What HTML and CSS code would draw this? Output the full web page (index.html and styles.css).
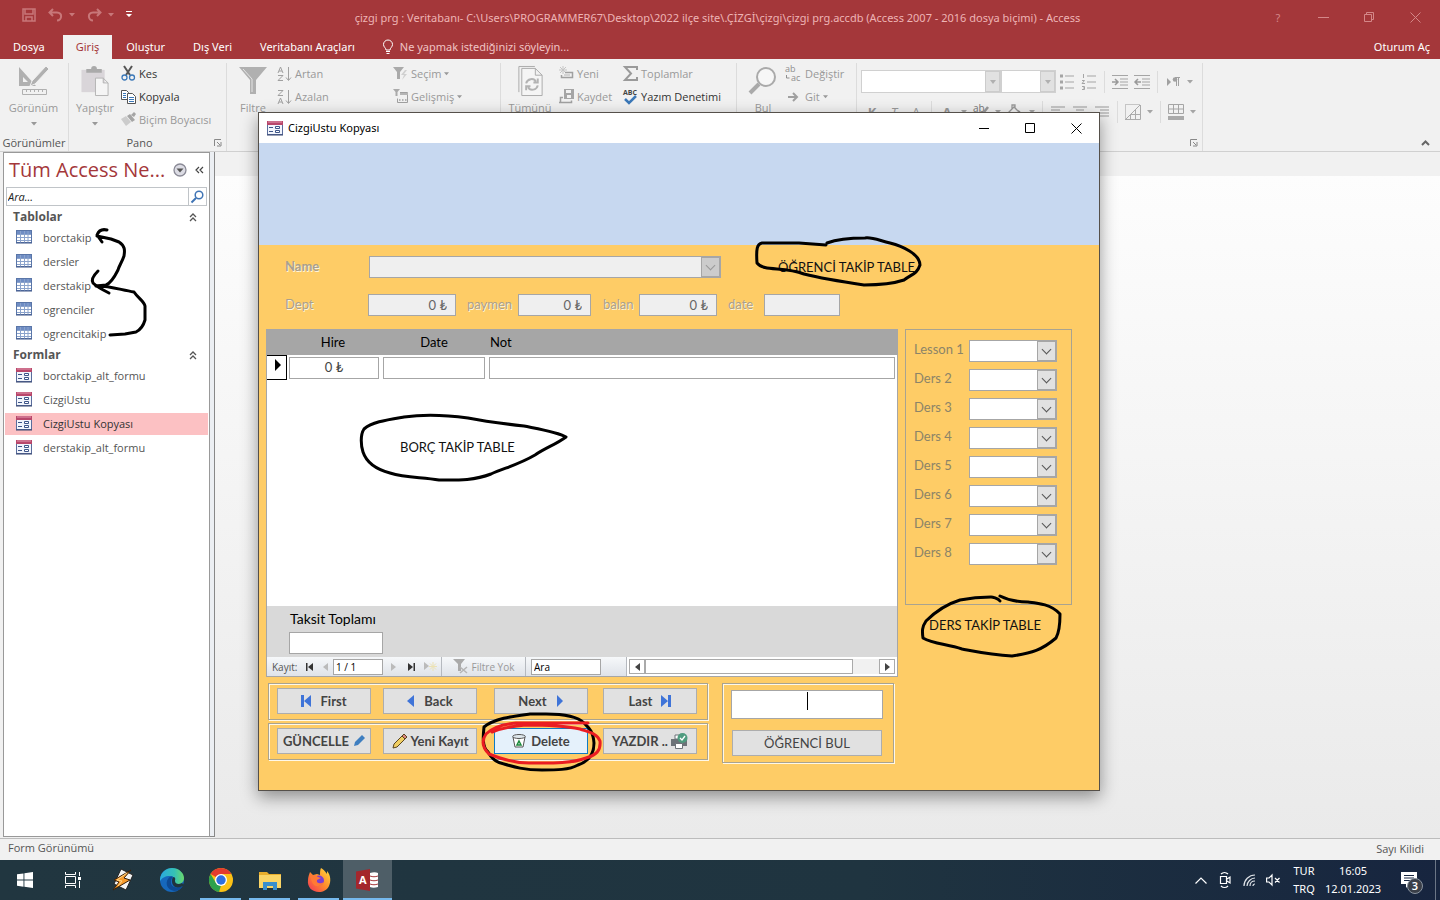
FILE: index.html
```html
<!DOCTYPE html>
<html lang="tr">
<head>
    <meta charset="UTF-8">
    <meta name="viewport" content="width=device-width, initial-scale=1.0">
    <title>çizgi prg - Access</title>
    <link rel="stylesheet" href="styles.css">
</head>
<body>
    <!-- Shared icons -->
    <svg class="symbols" aria-hidden="true">
        <symbol id="i-table" viewBox="0 0 16 14">
            <rect x=".5" y=".5" width="15" height="12" fill="#fff" stroke="#5a76a8"/>
            <path d="M1 1h14v3H1z" fill="#6f8dc4"/>
            <path d="M1 4.500h14M1 7.500h14M1 10.500h14M4.500 1v12M8.500 1v12M12 1v12" stroke="#8ba3cc" fill="none"/>
            <path d="M0 13h16" stroke="#3d5588"/>
        </symbol>
        <symbol id="i-form" viewBox="0 0 16 15">
            <rect x=".5" y=".5" width="15" height="13" fill="#f2f5fc" stroke="#5a6d9c"/>
            <path d="M0 0h16v4H0z" fill="#b8476b"/>
            <path d="M1 1h14" stroke="#e49ab0"/>
            <path d="M2 6.500h4M2 10.500h4" stroke="#3d5588"/>
            <path d="M8.500 5.500h4v2h-4zM8.500 9.500h4v2h-4z" fill="#fff" stroke="#3d5588"/>
            <path d="M0 14h16" stroke="#35456f"/>
        </symbol>
        <symbol id="i-down" viewBox="0 0 6 4"><path d="M0 0h6L3 3.500z" fill="currentColor"/></symbol>
        <symbol id="i-dblup" viewBox="0 0 8 9"><path d="M1 4l3-3 3 3M1 8l3-3 3 3" fill="none" stroke="#555" stroke-width="1.300"/></symbol>
        <symbol id="i-launch" viewBox="0 0 8 8"><path d="M.5 7V.5H7M3 3l3 3M7 3v4H3" fill="none" stroke="currentColor"/></symbol>
        <symbol id="i-align" viewBox="0 0 14 12"><path d="M0 1h14M0 4h9M0 7h14M0 10h9" stroke="currentColor"/></symbol>
    </svg>

    <!-- Title bar -->
    <header class="titlebar">
        <div class="quick">
            <button aria-label="Kaydet"><svg width="14" height="14" viewBox="0 0 14 14"><path d="M1 1h12v12H1zM3 1v5h8V1M4 13V9h6v4" fill="none" stroke="currentColor" stroke-width="1.500"/></svg></button>
            <button aria-label="Geri al" class="wide"><svg width="15" height="14" viewBox="0 0 15 14"><path d="M5 1L1.500 4.500 5 8M2 4.500h7c6 0 5 8 0 8" fill="none" stroke="currentColor" stroke-width="2"/></svg><svg width="6" height="4"><use href="#i-down"/></svg></button>
            <button aria-label="Yinele" class="wide"><svg width="15" height="14" viewBox="0 0 15 14"><path d="M10 1l3.500 3.500L10 8M13 4.500H6c-6 0-5 8 0 8" fill="none" stroke="currentColor" stroke-width="2"/></svg><svg width="6" height="4"><use href="#i-down"/></svg></button>
            <button aria-label="Özelleştir" class="bright"><svg width="6" height="7" viewBox="0 0 6 7"><path d="M0 0h6v1H0zM0 3h6L3 6z" fill="currentColor"/></svg></button>
        </div>
        <h1>çizgi prg : Veritabanı- C:\Users\PROGRAMMER67\Desktop\2022 ilçe site\.ÇİZGİ\çizgi\çizgi prg.accdb (Access 2007 - 2016 dosya biçimi) - Access</h1>
        <div class="win-controls">
            <button>?</button>
            <button aria-label="Simge durumu"><svg width="11" height="11"><path d="M0 5.500h11" stroke="currentColor"/></svg></button>
            <button aria-label="Geri yükle"><svg width="11" height="11"><path d="M.5 2.500h7v7h-7zM2.500 2.500v-2h7v7h-2" fill="none" stroke="currentColor"/></svg></button>
            <button aria-label="Kapat"><svg width="11" height="11"><path d="M.5.5l10 10M10.500.5l-10 10" stroke="currentColor"/></svg></button>
        </div>
    </header>

    <nav class="tabs">
        <a href="#" class="file">Dosya</a>
        <a href="#" class="active">Giriş</a>
        <a href="#">Oluştur</a>
        <a href="#">Dış Veri</a>
        <a href="#">Veritabanı Araçları</a>
        <a href="#" class="tell"><svg width="10" height="14" viewBox="0 0 10 14"><path d="M3 10c0-2-2.500-3-2.500-5.500a4.500 4.500 0 019 0C9.500 7 7 8 7 10zM3 11.500h4M3.500 13.500h3" fill="none" stroke="#fff"/></svg>Ne yapmak istediğinizi söyleyin...</a>
        <a href="#" class="signin">Oturum Aç</a>
    </nav>

    <!-- Ribbon -->
    <div class="ribbon">
        <section class="group views">
            <div class="tools">
                <button class="big" disabled>
                    <svg width="32" height="30" viewBox="0 0 32 30"><path d="M1 1l17 19H1zM5 11v5h5z" fill="#b0b0b0" fill-rule="evenodd"/><path d="M28 0l3 3-14 15-5 2 2-5z" fill="#b0b0b0" stroke="#f1f1f1"/><path d="M4.500 23.500h24v5h-24zM8.500 24v2M12.500 24v2M16.500 24v2M20.500 24v2M24.500 24v2" fill="none" stroke="#b0b0b0"/></svg>
                    <span>Görünüm</span>
                    <svg width="6" height="4"><use href="#i-down"/></svg>
                </button>
            </div>
            <h2>Görünümler</h2>
        </section>
        <section class="group clipboard">
            <div class="tools">
                <button class="big" disabled>
                    <svg width="28" height="31" viewBox="0 0 28 31"><path d="M0 4h24v23H0z" fill="#d9d5d9"/><path d="M5 3h5a3 3 0 016 0h5v4H5z" fill="#aaa"/><path d="M14.500 12.500h8l5 5v13h-13zM22.500 12.500v5h5" fill="#f5f5f5" stroke="#b3b3b3"/></svg>
                    <span>Yapıştır</span>
                    <svg width="6" height="4"><use href="#i-down"/></svg>
                </button>
                <div class="stack">
                    <button><svg width="15" height="15" viewBox="0 0 15 15"><path d="M3 0l6 9M11 0L5 9" stroke="#555" stroke-width="2"/><circle cx="3.500" cy="11.500" r="2.500" fill="none" stroke="#3b78b8" stroke-width="1.300"/><circle cx="11" cy="11.500" r="2.500" fill="none" stroke="#3b78b8" stroke-width="1.300"/></svg>Kes</button>
                    <button><svg width="15" height="15" viewBox="0 0 15 15"><path d="M.5 1.500h5l2 2v7h-7z" fill="#fff" stroke="#555"/><path d="M6.500 4.500h5l3 3v7h-8z" fill="#fff" stroke="#555"/><path d="M2 4.500h3M2 6.500h3M2 8.500h3M8 8.500h5M8 10.500h5M8 12.500h5" stroke="#3b78b8"/></svg>Kopyala</button>
                    <button disabled><svg width="15" height="15" viewBox="0 0 15 15"><path d="M0 7l5-3 5 6-5 4z" fill="#ccc"/><path d="M6 4l3-2 5 6-3 2zM10 3l3-3 2 2-2 3z" fill="#a5a5a5"/></svg>Biçim Boyacısı</button>
                </div>
            </div>
            <h2>Pano</h2>
            <svg class="launch" width="8" height="8"><use href="#i-launch"/></svg>
        </section>
        <section class="group filter">
            <div class="tools">
                <button class="big" disabled>
                    <svg width="28" height="30" viewBox="0 0 28 30"><path d="M0 1h28L17 14v14h-6V14z" fill="#b0b0b0"/><path d="M4 3l9 10v13" stroke="#e5e5e5" fill="none"/></svg>
                    <span>Filtre</span>
                </button>
                <div class="stack first">
                    <button disabled><svg width="15" height="16" viewBox="0 0 15 16"><path d="M1 7l2.500-6L6 7M2 5h3M1 9.500h5l-5 5h5M11.500 1v13M9 11.500l2.500 3 2.500-3" fill="none" stroke="#a0a0a0"/></svg>Artan</button>
                    <button disabled><svg width="15" height="16" viewBox="0 0 15 16"><path d="M1 1.500h5l-5 5h5M1 15l2.500-6L6 15M2 13h3M11.500 1v13M9 11.500l2.500 3 2.500-3" fill="none" stroke="#a0a0a0"/></svg>Azalan</button>
                </div>
                <div class="stack">
                    <button disabled><svg width="15" height="15" viewBox="0 0 15 15"><path d="M0 1h11L7 6v7H4V6z" fill="#aaa"/><path d="M12 4l-4 5h3l-2 5 5-6h-3l3-4z" fill="#d0d0d0"/></svg>Seçim<svg width="5" height="4"><use href="#i-down"/></svg></button>
                    <button disabled><svg width="15" height="15" viewBox="0 0 15 15"><path d="M0 0h7L4.500 3v4h-2V3z" fill="#aaa"/><path d="M4.500 13.500v-4M7 3.500h7.500v10h-10" fill="none" stroke="#a0a0a0"/><path d="M7 4h8v2H7z" fill="#b5b5b5"/><path d="M6 11h1.500M9 11h1.500M12 11h1.500" stroke="#a0a0a0" stroke-width="1.500"/></svg>Gelişmiş<svg width="5" height="4"><use href="#i-down"/></svg></button>
                </div>
            </div>
        </section>
        <section class="group records">
            <div class="tools">
                <button class="big" disabled>
                    <svg width="25" height="31" viewBox="0 0 25 31"><path d="M.5 27V.5H17" fill="none" stroke="#aaa"/><path d="M3.500 2.500h14l7 7v21h-21zM17.500 2.500v7h7" fill="#f5f5f5" stroke="#aaa"/><path d="M8 18c1-5 8-6 10-2M20 13v4h-4.500M20 20c-1 5-8 6-10 2M8 25v-4h4.500" fill="none" stroke="#b3b3b3" stroke-width="2"/></svg>
                    <span>Tümünü</span>
                </button>
                <div class="stack">
                    <button disabled><svg width="15" height="15" viewBox="0 0 15 15"><path d="M4 0v8M0 4h8M1 1l6 6M7 1L1 7" stroke="#c5c5c5"/><path d="M6 6.500h7.500v5H2.500V9" fill="none" stroke="#a0a0a0" stroke-width="1.500"/><path d="M5 9h6" stroke="#b5b5b5"/></svg>Yeni</button>
                    <button disabled><svg width="15" height="15" viewBox="0 0 15 15"><path d="M5 0h10v10H5z" fill="#a5a5a5"/><path d="M7 1h5v3H7zM8 6h4v3H8z" fill="#f1f1f1"/><path d="M4 8.500H1.500v5h11v-2M0 13.500h3" fill="none" stroke="#a0a0a0" stroke-width="1.500"/></svg>Kaydet</button>
                </div>
                <div class="stack second">
                    <button disabled><svg width="15" height="15" viewBox="0 0 15 15"><path d="M14 4V1H2l6 6.500L2 14h12v-3" fill="none" stroke="#9a9a9a" stroke-width="2"/></svg>Toplamlar</button>
                    <button><svg width="15" height="16" viewBox="0 0 15 16"><text x="0" y="6" font-size="7" font-weight="700" font-family="Open Sans, sans-serif" fill="#444">ABC</text><path d="M2 10l4 4 7-7" fill="none" stroke="#3b78b8" stroke-width="2.500"/></svg>Yazım Denetimi</button>
                </div>
            </div>
        </section>
        <section class="group find">
            <div class="tools">
                <button class="big" disabled>
                    <svg width="28" height="30" viewBox="0 0 28 30"><circle cx="17" cy="11" r="9" fill="#f7f7f7" stroke="#aaa" stroke-width="2"/><path d="M10 18L1 27" stroke="#aaa" stroke-width="4"/></svg>
                    <span>Bul</span>
                </button>
                <div class="stack">
                    <button disabled><svg width="17" height="16" viewBox="0 0 17 16"><text x="0" y="6" font-size="9" font-family="Open Sans, sans-serif" fill="#8f8f8f">ab</text><text x="6" y="15" font-size="9" font-family="Open Sans, sans-serif" fill="#8f8f8f">ac</text><path d="M1.500 9v3h3" fill="none" stroke="#8f8f8f"/></svg>Değiştir</button>
                    <button disabled><svg width="17" height="12" viewBox="0 0 17 12"><path d="M3 6h9M8 2l4 4-4 4" fill="none" stroke="#a0a0a0" stroke-width="2"/></svg>Git<svg width="5" height="4"><use href="#i-down"/></svg></button>
                </div>
            </div>
        </section>
        <section class="group text">
            <div class="format">
                <span class="combo ribbon-combo font"><select aria-label="Yazı tipi" disabled></select></span>
                <span class="combo ribbon-combo size"><select aria-label="Yazı boyutu" disabled></select></span>
                <button disabled aria-label="Madde işaretleri"><svg width="14" height="16" viewBox="0 0 14 16"><path d="M5 2h9M5 8h9M5 14h9" stroke="#a5a5a5"/><path d="M0 2h3M0 8h3M0 14h3" stroke="#a5a5a5" stroke-width="3"/></svg></button>
                <button disabled aria-label="Numaralandırma"><svg width="14" height="16" viewBox="0 0 14 16"><path d="M5 2h9M5 8h9M5 14h9" stroke="#a5a5a5"/><path d="M1.500 0v4M0 6.500h2.500L0 9.500h3M0 12.500h2.500v3H0M1 14h1" stroke="#a5a5a5" fill="none"/></svg></button>
                <i></i>
                <button disabled aria-label="Girinti artır"><svg width="16" height="14" viewBox="0 0 16 14"><path d="M0 .5h16M8 4h8M8 7h8M8 10h8M0 13.500h16" stroke="#a5a5a5"/><path d="M0 7h6M3 4l3 3-3 3" fill="none" stroke="#999" stroke-width="1.500"/></svg></button>
                <button disabled aria-label="Girinti azalt"><svg width="16" height="14" viewBox="0 0 16 14"><path d="M0 .5h16M8 4h8M8 7h8M8 10h8M0 13.500h16" stroke="#a5a5a5"/><path d="M7 7H1M4 4L1 7l3 3" fill="none" stroke="#999" stroke-width="1.500"/></svg></button>
                <i></i>
                <button disabled aria-label="Metin yönü"><svg width="13" height="10" viewBox="0 0 13 10"><path d="M0 1l4 4-4 4z" fill="#a0a0a0"/><path d="M13 .5H8M9.500 0v9M11.500 0v9" stroke="#a0a0a0"/><circle cx="8" cy="2.500" r="2.300" fill="#a0a0a0"/></svg></button>
                <svg class="arrow" width="12" height="4" viewBox="-3 0 12 4"><use href="#i-down" width="6" height="4"/></svg>
            </div>
            <div class="format">
                <button disabled><b>K</b></button>
                <button disabled><em>T</em></button>
                <button disabled><u>A</u></button>
                <i></i>
                <button disabled><b>A</b></button>
                <svg class="arrow" width="12" height="4" viewBox="-3 0 12 4"><use href="#i-down" width="6" height="4"/></svg>
                <button disabled aria-label="Vurgu"><svg width="16" height="16" viewBox="0 0 16 16"><text x="0" y="8" font-size="10" font-family="Open Sans, sans-serif" fill="#777">ab</text><path d="M15 3L8 12" stroke="#999" stroke-width="2.500"/></svg></button>
                <svg class="arrow" width="12" height="4" viewBox="-3 0 12 4"><use href="#i-down" width="6" height="4"/></svg>
                <button disabled aria-label="Dolgu"><svg width="14" height="16" viewBox="0 0 14 16"><path d="M1 8l5-5 5 5-5 5zM4 5V1h3v4" fill="none" stroke="#999" stroke-width="1.300"/><path d="M10 6c3 1 3 3 3 5l-2-2z" fill="#888"/></svg></button>
                <svg class="arrow" width="12" height="4" viewBox="-3 0 12 4"><use href="#i-down" width="6" height="4"/></svg>
                <i></i>
                <button disabled aria-label="Sola hizala"><svg width="14" height="12"><use href="#i-align"/></svg></button>
                <button disabled aria-label="Ortala"><svg width="14" height="12" viewBox="0 0 14 12"><path d="M0 1h14M3 4h8M0 7h14M3 10h8" stroke="currentColor"/></svg></button>
                <button disabled aria-label="Sağa hizala"><svg width="14" height="12" viewBox="0 0 14 12"><path d="M0 1h14M5 4h9M0 7h14M5 10h9" stroke="currentColor"/></svg></button>
                <i></i>
                <button disabled aria-label="Kılavuz"><svg width="16" height="16" viewBox="0 0 16 16"><path d="M.5 15.500V.5h15" fill="none" stroke="#999" stroke-dasharray="1 1"/><path d="M0 15.500h15.500V1M1 15L15 1M10.500 5.500v10M5.500 10.500h10M5.500 11v4" fill="none" stroke="#aaa"/></svg></button>
                <svg class="arrow" width="12" height="4" viewBox="-3 0 12 4"><use href="#i-down" width="6" height="4"/></svg>
                <i></i>
                <button disabled aria-label="Satır rengi"><svg width="16" height="16" viewBox="0 0 16 16"><path d="M.5.5h15v9H.5zM.5 5h15M5.500.5v9M10.500.5v9" fill="none" stroke="#a5a5a5"/><path d="M0 12h16v4H0z" fill="#aaa"/></svg></button>
                <svg class="arrow" width="12" height="4" viewBox="-3 0 12 4"><use href="#i-down" width="6" height="4"/></svg>
            </div>
            <svg class="launch" width="8" height="8"><use href="#i-launch"/></svg>
        </section>
        <button class="collapse" aria-label="Şeridi daralt"><svg width="9" height="6" viewBox="0 0 9 6"><path d="M1 5l3.500-3.500L8 5" fill="none" stroke="#666" stroke-width="2"/></svg></button>
    </div>

    <main class="workspace">
        <!-- Navigation pane -->
        <aside class="pane">
            <div class="pane-title">
                <h2>Tüm Access Ne...</h2>
                <button aria-label="Liste"><svg width="14" height="14" viewBox="0 0 14 14"><circle cx="7" cy="7" r="6" fill="#dcdce4" stroke="#8a8a96" stroke-width="1.300"/><path d="M3.500 5.500h7L7 9.500z" fill="#555"/></svg></button>
                <button aria-label="Daralt"><svg width="9" height="8" viewBox="0 0 9 8"><path d="M4 1L1 4l3 3M8 1L5 4l3 3" fill="none" stroke="#444" stroke-width="1.200"/></svg></button>
            </div>
            <div class="search">
                <input type="text" aria-label="Ara" placeholder="Ara...">
                <button aria-label="Bul"><svg width="13" height="13" viewBox="0 0 13 13"><circle cx="8" cy="5" r="3.800" fill="none" stroke="#3f74b5" stroke-width="1.500"/><path d="M5 8l-4.500 4.500" stroke="#3f74b5" stroke-width="2"/></svg></button>
            </div>
            <h3>Tablolar<svg width="8" height="9"><use href="#i-dblup"/></svg></h3>
            <ul>
                <li><a href="#"><svg width="16" height="14"><use href="#i-table"/></svg>borctakip</a></li>
                <li><a href="#"><svg width="16" height="14"><use href="#i-table"/></svg>dersler</a></li>
                <li><a href="#"><svg width="16" height="14"><use href="#i-table"/></svg>derstakip</a></li>
                <li><a href="#"><svg width="16" height="14"><use href="#i-table"/></svg>ogrenciler</a></li>
                <li><a href="#"><svg width="16" height="14"><use href="#i-table"/></svg>ogrencitakip</a></li>
            </ul>
            <h3>Formlar<svg width="8" height="9"><use href="#i-dblup"/></svg></h3>
            <ul>
                <li><a href="#"><svg width="15" height="15"><use href="#i-form"/></svg>borctakip_alt_formu</a></li>
                <li><a href="#"><svg width="15" height="15"><use href="#i-form"/></svg>CizgiUstu</a></li>
                <li><a href="#" class="selected"><svg width="15" height="15"><use href="#i-form"/></svg>CizgiUstu Kopyası</a></li>
                <li><a href="#"><svg width="15" height="15"><use href="#i-form"/></svg>derstakip_alt_formu</a></li>
            </ul>
        </aside>
        <div class="splitter"></div>
        <div class="canvas"></div>
    </main>

    <div class="statusbar"><span>Form Görünümü</span><span class="numlock">Sayı Kilidi</span></div>

    <!-- Taskbar -->
    <footer class="taskbar">
        <button aria-label="Başlat"><svg width="16" height="16" viewBox="0 0 16 16"><path d="M0 2.300L6.500 1.400v6.200H0zM7.400 1.300L16 0v7.600H7.400zM0 8.500h6.500v6.200L0 13.800zM7.400 8.500H16V16l-8.600-1.200z" fill="#fff"/></svg></button>
        <button aria-label="Görev görünümü"><svg width="17" height="16" viewBox="0 0 17 16"><path d="M.5 0v2.500h10V0M.5 16v-2.500h10V16M.5 4.500h10v7H.5zM14.500 0v4M14.500 9v7" fill="none" stroke="#fff"/><path d="M13 5h3v3h-3z" fill="#fff"/></svg></button>
        <button aria-label="Winamp"><svg width="22" height="22" viewBox="0 0 22 22"><path d="M9 0l12 6-7 15L2 15z" fill="#f4f4f4" stroke="#222"/><path d="M19 1L2 11l5 2-6 8L18 11l-6-2z" fill="#f79a2b" stroke="#3a1f08"/><path d="M15 4L5 11l5 1-4 5" fill="none" stroke="#ffd68a"/></svg></button>
        <button aria-label="Edge"><svg width="24" height="24" viewBox="0 0 24 24"><defs><linearGradient id="edgeTop"><stop offset="0" stop-color="#2aa9e0"/><stop offset=".6" stop-color="#35c1b5"/><stop offset="1" stop-color="#6bd86a"/></linearGradient></defs><circle cx="12" cy="12" r="12" fill="#1668bd"/><path d="M0 11C1 4 6 0 12 0c7 0 12 5 12 10 0 4-3 6-6 6-4 0-4-2-3-4 0-2-2-4-5-4-5 0-8 2-10 5z" fill="url(#edgeTop)"/><path d="M8 11c-3 4-1 11 6 12 4 0 7-2 9-5-7 3-13 1-12-5 0-2 1-3 2-4-2-1-4 0-5 2z" fill="#0e4a94"/><path d="M12 13c0-3 1-4 2-4 2 1 1 3 1 4 0 3 4 4 7 2l2 2-1 1c-6 3-11 1-11-5z" fill="#20343e"/></svg></button>
        <button aria-label="Chrome" class="open"><svg width="24" height="24" viewBox="0 0 24 24"><circle cx="12" cy="12" r="12" fill="#fbc116"/><path d="M12 12L1.600 6A12 12 0 0122.400 6H12z" fill="#e33b2e"/><path d="M1.600 6L7 15l5 2.500L10 24A12 12 0 011.600 6z" fill="#2da14c"/><circle cx="12" cy="12" r="6" fill="#fff"/><circle cx="12" cy="12" r="4.700" fill="#2e6fe0"/></svg></button>
        <button aria-label="Dosya Gezgini" class="open"><svg width="22" height="19" viewBox="0 0 22 19"><path d="M0 1h8l2 2h12v14H0z" fill="#e9ae2c"/><path d="M0 4h22v13H0z" fill="#fbd566"/><path d="M4 19v-8h14v8h-4v-4H8v4z" fill="#3a8fce"/></svg></button>
        <button aria-label="Firefox" class="open"><svg width="24" height="24" viewBox="0 0 24 24"><defs><linearGradient id="fox" x1="1" y1="0" x2="0" y2="1"><stop offset="0" stop-color="#ffe23f"/><stop offset=".5" stop-color="#ff8a2b"/><stop offset="1" stop-color="#f0315c"/></linearGradient></defs><path d="M3 4l3 3 4-1 3 1c0-3 0-5 1-7 2 1 4 3 6 6V3c4 4 4 11 2 15-2 4-6 6-10 6C5 24 0 19 1 12c0-3 1-5 2-8z" fill="url(#fox)"/><circle cx="12" cy="12.500" r="5" fill="#7b3fd0"/><path d="M3 8c3-2 6-1 8 1l3 1-4 2c-1 4 4 4 7 2-2 5-10 6-12 0z" fill="#ff7a35"/></svg></button>
        <button aria-label="Access" class="open current"><svg width="24" height="22" viewBox="0 0 24 22"><path d="M14 4c3-1 6-1 8 0v14c-3 1-6 1-8 0z" fill="#fff"/><path d="M14 7c3 1 5 1 8 0M14 11c3 1 5 1 8 0M14 15c3 1 5 1 8 0" fill="none" stroke="#a4373a"/><path d="M0 2.500L14 0v22L0 19.500z" fill="#a4262c"/><text x="3" y="15" font-size="11" font-weight="700" font-family="Open Sans, sans-serif" fill="#fff">A</text></svg></button>
        <div class="tray">
            <button aria-label="Gizli simgeler"><svg width="12" height="7" viewBox="0 0 12 7"><path d="M.5 6.500L6 1l5.500 5.500" fill="none" stroke="#fff" stroke-width="1.200"/></svg></button>
            <button aria-label="Kamera"><svg width="12" height="16" viewBox="0 0 12 16"><path d="M1.500 4.500h6v7h-6zM8 7l3-2v6L8 9M2 2c2-2 5-2 7 0M2 14c2 2 5 2 7 0" fill="none" stroke="#fff" stroke-width="1.200"/></svg></button>
            <button aria-label="Ağ"><svg width="13" height="13" viewBox="0 0 13 13"><path d="M1 12C1 6 6 1 12 1M4 12c0-4 4-8 8-8M7 12c0-3 2-5 5-5M10 12c0-1 1-2 2-2" fill="none" stroke="#dfe3e8" stroke-width="1.200"/></svg></button>
            <button aria-label="Ses"><svg width="15" height="12" viewBox="0 0 15 12"><path d="M.6 4h2.500L6 1v10L3 8H.6zM9 4l4.500 4.500M13.500 4L9 8.500" fill="none" stroke="#fff" stroke-width="1.200"/></svg></button>
            <span class="lang">TUR<br>TRQ</span>
            <time>16:05<br>12.01.2023</time>
            <button class="notes" aria-label="Bildirimler"><svg width="16" height="16" viewBox="0 0 16 16"><path d="M0 0h16v12H8l-3 4v-4H0z" fill="#fff"/><path d="M3 3.500h10M3 6h10M3 8.500h7" stroke="#182742"/></svg><span>3</span></button>
        </div>
    </footer>

    <!-- Form window -->
    <div class="dialog">
        <div class="dialog-title">
            <svg width="16" height="15"><use href="#i-form"/></svg>
            <h2>CizgiUstu Kopyası</h2>
            <button aria-label="Simge durumu"><svg width="11" height="11"><path d="M0 5.500h10" stroke="#000"/></svg></button>
            <button aria-label="Ekranı kapla"><svg width="11" height="11"><path d="M.5.5h9v9h-9z" fill="none" stroke="#000"/></svg></button>
            <button aria-label="Kapat"><svg width="11" height="11"><path d="M.5.5l10 10M10.500.5l-10 10" stroke="#000"/></svg></button>
        </div>
        <div class="banner"></div>
        <form class="form" onsubmit="return false">
            <div class="row name-row">
                <label class="etched strong" for="name">Name</label>
                <span class="combo off"><select id="name" disabled></select></span>
                <span class="note">ÖĞRENCİ TAKİP TABLE</span>
            </div>
            <div class="row money-row">
                <label class="etched" for="dept">Dept</label>
                <input type="text" id="dept" value="0 ₺" disabled>
                <label class="etched" for="payment">paymen</label>
                <input type="text" id="payment" value="0 ₺" disabled>
                <label class="etched" for="balance">balan</label>
                <input type="text" id="balance" value="0 ₺" disabled>
                <label class="etched" for="date">date</label>
                <input type="text" id="date" disabled>
            </div>

            <div class="columns">
                <div class="subform">
                    <table>
                        <thead>
                            <tr><th class="sel"></th><th class="hire">Hire</th><th class="date">Date</th><th class="not">Not</th></tr>
                        </thead>
                        <tbody>
                            <tr>
                                <td class="marker"><svg width="7" height="12" viewBox="0 0 7 12"><path d="M0 0l6 6-6 6z"/></svg></td>
                                <td><input type="text" aria-label="Hire" value="0 ₺"></td>
                                <td><input type="text" aria-label="Date"></td>
                                <td><input type="text" aria-label="Not"></td>
                            </tr>
                        </tbody>
                    </table>
                    <div class="blank"><span class="note">BORÇ TAKİP TABLE</span></div>
                    <div class="total">
                        <label for="total">Taksit Toplamı</label>
                        <input type="text" id="total">
                    </div>
                    <div class="recordbar">
                        <label class="caption" for="record">Kayıt:</label>
                        <button aria-label="İlk kayıt"><svg width="7" height="8" viewBox="0 0 7 8"><path d="M0 0h1.500v8H0zM7 0v8L2 4z" fill="#333"/></svg></button>
                        <button aria-label="Önceki kayıt"><svg width="5" height="8" viewBox="0 0 5 8"><path d="M5 0v8L0 4z" fill="#bbb"/></svg></button>
                        <input type="text" id="record" class="record" value="1 / 1">
                        <button class="next" aria-label="Sonraki kayıt"><svg width="5" height="8" viewBox="0 0 5 8"><path d="M0 0v8l5-4z" fill="#bbb"/></svg></button>
                        <button aria-label="Son kayıt"><svg width="7" height="8" viewBox="0 0 7 8"><path d="M5.500 0H7v8H5.500zM0 0v8l5-4z" fill="#333"/></svg></button>
                        <button class="add" aria-label="Yeni kayıt"><svg width="13" height="9" viewBox="0 0 13 9"><path d="M0 0v8l5-4z" fill="#bbb"/><path d="M9 0v9M5 4.500h8M6 1.500l6 6M12 1.500l-6 6" stroke="#ece2b4"/></svg></button>
                        <button class="nofilter" disabled><svg width="16" height="15" viewBox="0 0 16 15"><path d="M0 0h12L8 5v7H5V5z" fill="#aaa"/><path d="M7 8l7 6M14 8l-7 6" stroke="#b5b5b5" stroke-width="1.500"/></svg>Filtre Yok</button>
                        <input type="text" class="find-box" aria-label="Ara" value="Ara">
                        <div class="scroll">
                            <button aria-label="Sola kaydır"><svg width="5" height="8" viewBox="0 0 5 8"><path d="M5 0v8L0 4z" fill="#444"/></svg></button>
                            <div class="track"><div class="thumb"></div></div>
                            <button aria-label="Sağa kaydır"><svg width="5" height="8" viewBox="0 0 5 8"><path d="M0 0v8l5-4z" fill="#444"/></svg></button>
                        </div>
                    </div>
                </div>
                <div class="side">
                    <div class="lessons">
                        <label for="d1">Lesson 1</label><span class="combo"><select id="d1"></select></span>
                        <label for="d2">Ders 2</label><span class="combo"><select id="d2"></select></span>
                        <label for="d3">Ders 3</label><span class="combo"><select id="d3"></select></span>
                        <label for="d4">Ders 4</label><span class="combo"><select id="d4"></select></span>
                        <label for="d5">Ders 5</label><span class="combo"><select id="d5"></select></span>
                        <label for="d6">Ders 6</label><span class="combo"><select id="d6"></select></span>
                        <label for="d7">Ders 7</label><span class="combo"><select id="d7"></select></span>
                        <label for="d8">Ders 8</label><span class="combo"><select id="d8"></select></span>
                    </div>
                    <span class="note">DERS TAKİP TABLE</span>
                </div>
            </div>

            <div class="actions">
                <div class="action-rows">
                    <div class="box">
                        <button class="btn"><svg width="10" height="14" viewBox="0 0 10 14"><path d="M0 1h3v12H0zM10 1v12L3 7z" fill="#3f74d8"/></svg>First</button>
                        <button class="btn"><svg width="8" height="12" viewBox="0 0 8 12"><path d="M7 0v12L0 6z" fill="#3f74d8"/></svg>Back</button>
                        <button class="btn">Next<svg width="8" height="12" viewBox="0 0 8 12"><path d="M1 0v12l6-6z" fill="#3f74d8"/></svg></button>
                        <button class="btn">Last<svg width="10" height="14" viewBox="0 0 10 14"><path d="M7 1h3v12H7zM0 1v12l7-6z" fill="#3f74d8"/></svg></button>
                    </div>
                    <div class="box second-row">
                        <button class="btn">GÜNCELLE<svg width="11" height="11" viewBox="0 0 11 11"><path d="M8 0l3 3-7 7-4 1 1-4z" fill="#3f7fc0"/></svg></button>
                        <button class="btn tight"><svg width="16" height="16" viewBox="0 0 16 16"><path d="M12 1l3 3L5 14l-4 1 1-4z" fill="#f1cf63" stroke="#5a4520"/><path d="M12 1l3 3-2 2-3-3z" fill="#d9867e" stroke="#5a4520"/></svg>Yeni Kayıt</button>
                        <button class="btn focus"><svg width="14" height="14" viewBox="0 0 14 14"><path d="M1 3h12l-2 10H3z" fill="#fff" stroke="#555"/><ellipse cx="7" cy="2.500" rx="6.300" ry="2" fill="#dfe8ec" stroke="#555"/><path d="M7 7l2 4H5z" fill="none" stroke="#1c8a3c" stroke-width="1.500"/></svg>Delete</button>
                        <button class="btn tight">YAZDIR ..<svg width="17" height="16" viewBox="0 0 17 16"><path d="M0 6h16v7H0z" fill="#6d7378"/><path d="M4 2h6v4H4zM4.500 10.500h7v5h-7z" fill="#fff" stroke="#6d7378"/><circle cx="11.500" cy="5" r="5" fill="#4f9c7f"/><path d="M9 5l2 2 3-4" fill="none" stroke="#fff" stroke-width="1.300"/></svg></button>
                    </div>
                </div>
                <div class="box finder">
                    <div class="entry"><input type="text" aria-label="Öğrenci"><i class="caret"></i></div>
                    <button class="btn plain">ÖĞRENCİ BUL</button>
                </div>
            </div>
        </form>
    </div>

    <!-- Pen marks -->
    <svg class="ink" viewBox="0 0 1440 900" width="1440" height="900" aria-hidden="true">
        <g fill="none" stroke="#000" stroke-width="3" stroke-linecap="round" stroke-linejoin="round">
            <path d="M107 230c-4-1-8 0-10 5l5 7M97 236l14 3 8 3c6 4 6 8 5 14-2 6-5 10-6 14-3 6-7 13-12 15l-10 1"/>
            <path d="M98 271c-4 4-7 9-5 12 4 4 10 7 16 10M97 286c14 0 24 4 37 6 4 6 10 9 11 14v14c-2 7-5 10-9 12l-11 2-15 1"/>
            <path d="M826 245l-27-2h-37c-5 1-6 6-5 20 7 9 26 3 47 11 20 5 40 8 60 11 17 0 31-2 40-5 8-6 13-6 16-15 0-11-18-19-30-22-12-3-18-6-25-5-16 0-30 2-38 5"/>
            <path d="M566 437c-8-5-27-8-42-11-18-2-36-4-56-8-22-3-43-4-64-1-18 3-32 5-40 12-4 6-3 17-1 23 3 9 12 17 27 21 16 5 32 4 49 7 16 0 34 1 52-6 13-6 27-9 44-19 12-8 20-10 31-18z"/>
            <path d="M1000 601c-2-3-8-4-9-4-13 0-21 1-31 3-13 4-24 11-34 21-4 6-4 10-3 17 10 6 24 6 39 11 16 3 30 6 50 7 20-3 30-6 44-18 4-7 4-16 4-24-9-10-23-11-32-12-13 0-22-3-28-6"/>
            <path d="M530 714c-15 2-35 4-46 13-1 9-2 20 4 25 4 7 9 11 16 12 10 3 20 6 38 6 14 0 27 0 36-5 12-4 16-12 16-22-1-12-5-15-10-20-8-8-24-9-38-9z"/>
        </g>
        <g fill="none" stroke="#ea1c22" stroke-width="3" stroke-linecap="round" stroke-linejoin="round">
            <path d="M588 723h-72c-12 1-24 5-30 11-5 7-3 14 3 20 12 5 25 9 40 9 18 0 42 1 57-5 10-3 15-7 14-17-3-8-12-9-20-12-20-4-40-4-54-4-13 1-24 3-34 7"/>
        </g>
    </svg>
</body>
</html>
```
FILE: styles.css
```css
* {
    margin: 0;
    padding: 0;
    box-sizing: border-box;
}
body {
    font-family: 'Open Sans', 'Noto Sans', sans-serif;
    font-size: 11px;
    line-height: 16px;
    color: #333;
    background: #f1f1f1;
    min-height: 100vh;
    display: flex;
    flex-direction: column;
    position: relative;
    overflow: hidden;
}
button, input, select {
    font: inherit;
    color: inherit;
    border: none;
    background: none;
    border-radius: 0;
    outline: none;
}
button {
    display: flex;
    align-items: center;
    justify-content: center;
}
svg {
    display: block;
    flex: none;
    overflow: visible;
}
a {
    color: inherit;
    text-decoration: none;
}
ul {
    list-style: none;
}
.symbols {
    position: absolute;
    width: 0;
    height: 0;
}
.titlebar, .tabs, .dialog-title, .tray {
    font-family: 'Noto Sans', 'Open Sans', sans-serif;
}

/* Title bar */
.titlebar {
    height: 35px;
    background: #a4373a;
    color: #eeb4b5;
    display: flex;
    align-items: center;
    justify-content: space-between;
}
.titlebar h1 {
    font-size: 11px;
    font-weight: 400;
    white-space: nowrap;
}
.quick {
    display: flex;
    gap: 12px;
    width: 180px;
    padding: 0 0 6px 22px;
    color: #c87779;
}
.quick .wide {
    gap: 6px;
}
.quick .bright {
    color: #fff;
}
.win-controls {
    display: flex;
    width: 185px;
    height: 30px;
    color: #d48788;
}
.win-controls button {
    width: 46px;
}

.tabs {
    height: 24px;
    background: #a4373a;
    color: #fff;
    display: flex;
}
.tabs a {
    padding: 0 14px;
    line-height: 24px;
    white-space: nowrap;
}
.tabs .file {
    padding: 0 18px 0 13px;
}
.tabs .active {
    background: #f1f1f1;
    color: #a4373a;
    padding: 0 13px;
}
.tabs .tell {
    display: flex;
    align-items: center;
    gap: 7px;
    color: #f0c4c5;
}
.tabs .signin {
    margin-left: auto;
    padding-right: 10px;
}

/* Ribbon */
.ribbon {
    height: 93px;
    border-bottom: 1px solid #d0d0d0;
    display: flex;
    color: #333;
}
.ribbon :disabled {
    color: #999;
}
.group {
    position: relative;
    border-right: 1px solid #dcdcdc;
    margin: 4px 0 0;
    padding-left: 4px;
    flex: none;
    display: flex;
    flex-direction: column;
    justify-content: space-between;
}
.group h2 {
    font-size: 11px;
    font-weight: 400;
    text-align: center;
    color: #555;
    line-height: 16px;
}
.group .launch {
    position: absolute;
    right: 4px;
    bottom: 4px;
    color: #888;
}
.tools {
    display: flex;
    white-space: nowrap;
}
.big {
    flex-direction: column;
    justify-content: flex-start;
    width: 44px;
    padding-top: 3px;
}
.big > svg:first-child {
    height: 30px;
}
.big span {
    margin-top: 4px;
    line-height: 16px;
}
.big span + svg {
    margin-top: 6px;
}
.stack button {
    height: 23px;
    gap: 3px;
    justify-content: flex-start;
}
.stack {
    margin-top: -1px;
}
.views {
    width: 69px;
    padding-left: 0;
}
.views .big {
    width: 67px;
}
.clipboard {
    width: 158px;
}
.clipboard .stack {
    margin-left: 4px;
}
.clipboard h2 {
    padding-right: 20px;
}
.filter {
    width: 274px;
}
.filter .first {
    width: 116px;
    margin-left: 2px;
}
.records {
    width: 236px;
}
.records .big {
    width: 50px;
}
.records .stack {
    width: 64px;
    margin-left: 4px;
}
.records .second {
    margin-left: 0;
}
.find {
    width: 120px;
}
.text {
    width: 346px;
    justify-content: flex-start;
    gap: 7px;
    padding-top: 7px;
}
.format {
    display: flex;
    align-items: center;
    height: 23px;
    color: #a5a5a5;
}
.format button {
    width: 22px;
    font-size: 13px;
}
.format i {
    width: 1px;
    height: 22px;
    margin: 0 4px;
    background: #dcdcdc;
}
.collapse {
    margin: auto 10px 5px auto;
}

/* Combo boxes */
.combo {
    position: relative;
    display: block;
    height: 22px;
    background: #fff;
    border: 1px solid #a6a6a6;
}
.combo select {
    appearance: none;
    width: 100%;
    height: 100%;
}
.combo::before {
    content: "";
    position: absolute;
    right: 0;
    top: 0;
    bottom: 0;
    width: 17px;
    background: #e1e1e1;
    border: 1px solid #a6a6a6;
    pointer-events: none;
}
.combo::after {
    content: "";
    position: absolute;
    right: 6px;
    top: 5px;
    width: 6px;
    height: 6px;
    border: solid #555;
    border-width: 0 1px 1px 0;
    transform: rotate(45deg);
    pointer-events: none;
}
.combo.off {
    background: #efefef;
}
.combo.off::before {
    background: #ccc;
}
.combo.off::after {
    border-color: #999;
}
.ribbon-combo {
    height: 23px;
    border-color: #d0d0d0;
}
.ribbon-combo::before {
    width: 13px;
    border-color: #ccc;
}
.ribbon-combo::after {
    right: 4px;
    top: 9px;
    width: 0;
    height: 0;
    border: solid transparent;
    border-width: 4px 3px 0;
    border-top-color: #b0b0b0;
    transform: none;
}
.font {
    width: 140px;
}
.size {
    width: 55px;
}

/* Workspace */
.workspace {
    flex: 1;
    display: flex;
    padding-left: 3px;
    background: #f1f1f1;
}
.pane {
    width: 207px;
    background: #fff;
    border: 1px solid #999;
    margin-bottom: 1px;
    padding: 0 1px;
    color: #555;
}
.splitter {
    width: 5px;
    border-right: 1px solid #888;
    border-bottom: 1px solid #888;
    margin-bottom: 1px;
    background: #eceff3;
}
.canvas {
    flex: 1;
    margin-top: 24px;
    background: linear-gradient(#fdfdfd, #eaeaea);
}
.pane-title {
    height: 34px;
    display: flex;
    align-items: center;
    padding: 0 4px;
}
.pane-title h2 {
    flex: 1;
    font-size: 20px;
    line-height: 34px;
    font-weight: 400;
    color: #a4373a;
    white-space: nowrap;
}
.pane-title button {
    margin-right: 8px;
}
.pane-title button:last-child {
    margin-right: 0;
}
.search {
    display: flex;
    height: 19px;
    margin: 0 1px 2px;
    border: 1px solid #c0c4c8;
}
.search input {
    flex: 1;
    min-width: 0;
    padding-left: 1px;
    border-right: 1px solid #c0c4c8;
}
.search input::placeholder {
    font-style: italic;
    color: #222;
    opacity: 1;
}
.search button {
    width: 17px;
}
.pane h3 {
    display: flex;
    align-items: center;
    justify-content: space-between;
    height: 18px;
    font-size: 12px;
    padding: 0 11px 0 8px;
}
.pane li {
    height: 24px;
    padding: 1px 0;
}
.pane li a {
    display: flex;
    align-items: center;
    height: 22px;
    padding-left: 11px;
}
.pane li svg {
    width: 16px;
    margin-right: 11px;
    margin-bottom: 2px;
}
.pane .selected {
    background: #fcc1c3;
    color: #333;
}

.statusbar {
    height: 22px;
    border-top: 1px solid #bcbcbc;
    padding: 1px 16px 0 8px;
    display: flex;
    justify-content: space-between;
    color: #555;
}
.numlock {
    padding-top: 1px;
}

/* Taskbar */
.taskbar {
    height: 40px;
    display: flex;
    background: linear-gradient(90deg, #213640, #1f3440 60%, #17253f);
    color: #fff;
}
.taskbar > button {
    width: 49px;
    position: relative;
}
.taskbar .open::after {
    content: "";
    position: absolute;
    left: 4px;
    right: 4px;
    bottom: 0;
    height: 2px;
    background: #76b9ed;
}
.taskbar .current {
    background: #4e5e67;
}
.taskbar .current::after {
    left: 0;
    right: 0;
}
.tray {
    margin-left: auto;
    display: flex;
    align-items: center;
    text-align: center;
    line-height: 18px;
    border-right: 1px solid #6b7686;
    margin-right: 4px;
}
.tray button {
    width: 24px;
}
.lang {
    width: 38px;
}
.tray time {
    width: 60px;
}
.tray .notes {
    width: 52px;
    position: relative;
}
.notes span {
    position: absolute;
    left: 24px;
    top: 6px;
    width: 16px;
    height: 16px;
    line-height: 14px;
    border: 1px solid #8a94a0;
    border-radius: 50%;
    background: #3a3f48;
    font-weight: 600;
}

/* Form window */
.dialog {
    position: absolute;
    left: 258px;
    top: 112px;
    width: 842px;
    border: 1px solid #55504a;
    background: #fecc66;
    box-shadow: 0 6px 16px rgba(0, 0, 0, 0.4);
}
.dialog-title {
    height: 30px;
    background: #fff;
    display: flex;
    align-items: center;
    padding-left: 8px;
}
.dialog-title h2 {
    flex: 1;
    font-size: 11px;
    font-weight: 400;
    color: #000;
    padding-left: 5px;
}
.dialog-title button {
    width: 46px;
}
.banner {
    height: 102px;
    background: #c7d8f0;
}
.form {
    font-family: 'Lato', 'Open Sans', sans-serif;
    font-size: 13px;
    padding: 11px 4px 27px 7px;
}
.form input[type=text] {
    background: #fff;
    border: 1px solid #a6a6a6;
    height: 22px;
    min-width: 0;
}
.form input:disabled {
    background: #efefef;
    color: #666;
    text-align: right;
    padding-right: 8px;
}
.row {
    display: flex;
    align-items: center;
    padding-left: 19px;
    margin-bottom: 16px;
}
.etched {
    color: #a9a08c;
    text-shadow: 1px 1px 0 #fff3dc;
    white-space: nowrap;
    padding-bottom: 2px;
}
.strong {
    font-weight: 700;
}
.name-row label {
    width: 84px;
}
.name-row .combo {
    width: 352px;
    margin-right: 57px;
}
.note {
    color: #111;
    font-size: 13px;
    white-space: nowrap;
}
.money-row {
    display: grid;
    grid-template-columns: 83px 99px 51px 85px 36px 89px 36px 76px;
    margin-bottom: 13px;
}
#dept {
    width: 88px;
}
#payment {
    width: 73px;
}
#balance {
    width: 78px;
}
#date {
    width: 76px;
}
.columns {
    display: flex;
    gap: 7px;
}

/* Subform */
.subform {
    width: 632px;
    height: 348px;
    border: 1px solid #a6a6a6;
    background: #fff;
    display: flex;
    flex-direction: column;
    color: #000;
}
.subform table {
    width: 100%;
    table-layout: fixed;
    border-spacing: 0;
}
.subform th {
    height: 25px;
    padding-bottom: 2px;
    background: #a6a6a6;
    font-weight: 400;
}
.subform td {
    height: 25px;
    padding: 0 2px;
}
.subform td input {
    display: block;
    width: 100%;
    height: 23px;
    padding-bottom: 2px;
    color: #444;
    text-align: center;
}
.subform .sel {
    width: 20px;
}
.subform .hire {
    width: 94px;
    padding-right: 2px;
}
.subform .date {
    width: 106px;
}
.subform .not {
    text-align: left;
    padding-left: 3px;
}
.subform .marker {
    border: solid #000;
    border-width: 1px 1px 1px 0;
    padding: 0 0 6px 8px;
    vertical-align: middle;
}
.blank {
    flex: 1;
    padding: 59px 133px;
}
.total {
    height: 51px;
    background: #d9d9d9;
    padding: 4px 0 0 22px;
}
.total label {
    display: block;
    font-size: 14px;
    line-height: 18px;
    margin-bottom: 4px;
    padding-left: 1px;
}
.total input {
    display: block;
    width: 94px;
}
.recordbar {
    height: 19px;
    display: flex;
    align-items: center;
    font-family: 'Open Sans', sans-serif;
    background: linear-gradient(#f6f8fa, #dfe3e9);
    padding-left: 5px;
    font-size: 10px;
    color: #555;
}
.recordbar .caption {
    width: 29px;
}
.recordbar button {
    width: 16px;
    height: 100%;
}
.recordbar .next {
    width: 20px;
}
.recordbar input[type=text] {
    height: 16px;
    padding-left: 2px;
    color: #000;
}
.recordbar .record {
    width: 50px;
}
.recordbar .add {
    width: 23px;
    border-right: 1px solid #b5b9bf;
}
.recordbar .nofilter {
    width: 84px;
    gap: 3px;
    color: #999;
    border-right: 1px solid #b5b9bf;
}
.recordbar .find-box {
    width: 70px;
    margin: 0 25px 0 5px;
}
.scroll {
    flex: 1;
    height: 100%;
    display: flex;
    align-items: center;
    border-left: 1px solid #b5b9bf;
    background: #fff;
    padding: 2px;
}
.recordbar .scroll button {
    border: 1px solid #aaa;
    background: #fff;
    height: 15px;
}
.track {
    flex: 1;
    height: 15px;
    background: #f1f1f1;
}
.thumb {
    width: 89%;
    height: 100%;
    background: #fff;
    border: 1px solid #aaa;
}

/* Lessons */
.side {
    display: flex;
    flex-direction: column;
}
.lessons {
    width: 167px;
    height: 276px;
    border: 1px solid #a9a390;
    padding: 10px 14px 0 8px;
    display: grid;
    grid-template-columns: 55px 88px;
    grid-auto-rows: 22px;
    row-gap: 7px;
    line-height: 19px;
    color: #8c8468;
    white-space: nowrap;
}
.side .note {
    padding: 12px 0 0 24px;
}

/* Buttons */
.actions {
    display: flex;
    gap: 14px;
    padding: 6px 0 0 2px;
}
.action-rows {
    display: flex;
    flex-direction: column;
    gap: 3px;
}
.box {
    border: 1px solid #a9a390;
    box-shadow: inset 1px 1px 0 #fff8e8, 1px 1px 0 #fff8e8;
}
.action-rows .box {
    width: 440px;
    height: 37px;
    padding: 4px 0 0 8px;
    display: grid;
    grid-template-columns: 106px 111px 109px 94px;
}
.btn {
    width: 94px;
    height: 26px;
    gap: 9px;
    padding-bottom: 1px;
    background: #e1e1e1;
    border: 1px solid #adadad;
    color: #444;
    font-weight: 700;
    white-space: nowrap;
}
.second-row .btn {
    gap: 5px;
}
.second-row .tight {
    gap: 3px;
}
.second-row .focus {
    background: #e5f1fb;
    border-color: #0f7bc4;
}
.finder {
    width: 172px;
    padding: 6px 8px;
}
.entry {
    position: relative;
}
.form .entry input {
    display: block;
    width: 152px;
    height: 29px;
    margin-bottom: 11px;
}
.caret {
    position: absolute;
    left: 76px;
    top: 2px;
    width: 1px;
    height: 18px;
    background: #000;
}
.plain {
    width: 150px;
    margin-left: 1px;
    font-weight: 400;
}

.ink {
    position: absolute;
    left: 0;
    top: 0;
    pointer-events: none;
}
```
